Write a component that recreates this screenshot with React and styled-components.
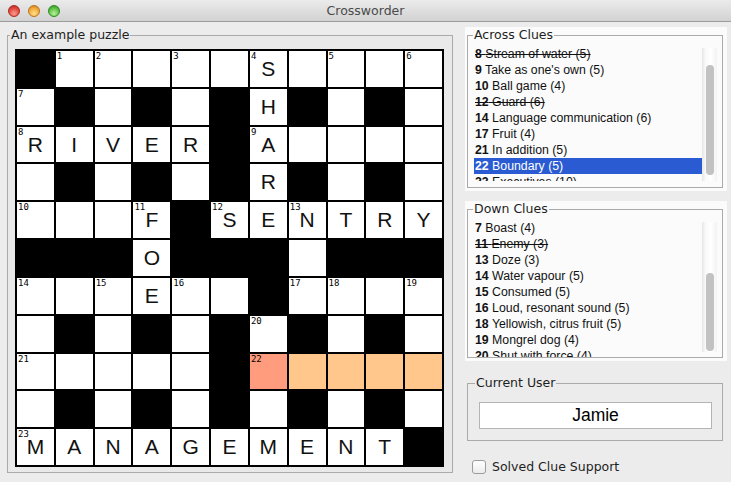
import React from 'react'
import styled, { createGlobalStyle } from 'styled-components'

const GlobalStyle = createGlobalStyle`
  html, body { margin: 0; padding: 0; background: #ececec; }
  * { box-sizing: border-box; }
`

const uiFont = `"DejaVu Sans", "Liberation Sans", sans-serif`
const listFont = `"Liberation Sans", Arial, sans-serif`

const Window = styled.div`
  width: 731px;
  height: 482px;
  background: #ececec;
  display: flex;
  flex-direction: column;
  overflow: hidden;
`

const TitleBar = styled.div`
  height: 22px;
  flex: none;
  display: flex;
  align-items: center;
  padding-left: 8px;
  background: linear-gradient(#ebebeb, #d2d2d2);
  border-bottom: 1px solid #9c9c9c;
`

const Lights = styled.div`
  display: flex;
  gap: 8px;
`

const lightColors = {
  red: ['#ff9a8f', '#e0463d', '#a92a22'],
  yellow: ['#ffe08a', '#f2a83a', '#b9741c'],
  green: ['#b7f09a', '#5cbf43', '#2f8a23'],
}

const Light = styled.span`
  width: 12px;
  height: 12px;
  border-radius: 50%;
  border: 1px solid ${p => lightColors[p.$c][2]};
  background: radial-gradient(circle at 50% 75%, ${p => lightColors[p.$c][0]} 0%, ${p => lightColors[p.$c][1]} 60%, ${p => lightColors[p.$c][2]} 100%);
`

const Title = styled.div`
  flex: 1;
  text-align: center;
  margin-left: -60px;
  font: 12.5px ${uiFont};
  color: #4a4a4a;
`

const Main = styled.div`
  flex: 1;
  display: flex;
  padding: 5px 0 0 7px;
  gap: 12px;
`

const Box = styled.fieldset`
  margin: 0;
  border: 1px solid #aaaaaa;
  padding: ${p => p.$pad};
  min-width: 0;
`

const Legend = styled.legend`
  font: 12.5px ${uiFont};
  line-height: 16px;
  color: #1e1e1e;
  padding: 0 1px;
  margin-left: ${p => p.$ml || 0}px;
`

const PuzzleBox = styled(Box)`
  width: 446px;
  height: 446px;
  background: #e9e9e9;
`

const Grid = styled.div`
  width: 429px;
  height: 418px;
  background: #000;
  padding: 2px;
  display: grid;
  grid-template-columns: repeat(11, 1fr);
  grid-template-rows: repeat(11, 1fr);
  gap: 2px;
`

const cellBg = {
  block: '#000',
  open: '#fff',
  start: '#ff9c7e',
  word: '#ffc78c',
}

const Cell = styled.div`
  position: relative;
  background: ${p => cellBg[p.$kind]};
  display: flex;
  align-items: center;
  justify-content: center;
  font: 21px ${listFont};
  color: #111;
`

const Num = styled.span`
  position: absolute;
  top: 1px;
  left: 1px;
  font: 9px "DejaVu Sans Mono", monospace;
  line-height: 9px;
  color: #000;
`

const Side = styled.div`
  width: 262px;
  display: flex;
  flex-direction: column;
`

const ListCard = styled.div`
  background: #fbfbfb;
  height: ${p => p.$h}px;
  margin-bottom: ${p => p.$mb || 0}px;
  padding: 0 4px 3px 2px;
`

const ClueBox = styled(Box)`
  height: 100%;
  display: flex;
`

const ListRow = styled.div`
  display: flex;
  align-items: flex-start;
  width: 100%;
  height: ${p => p.$h}px;
`

const List = styled.div`
  width: 228px;
  height: 100%;
  overflow: hidden;
  font: 12.3px ${listFont};
  color: #111;
`

const Clue = styled.div`
  height: 16px;
  line-height: 16px;
  padding-left: 1px;
  white-space: nowrap;
  background: ${p => (p.$selected ? '#2a5bd3' : 'transparent')};
  color: ${p => (p.$selected ? '#fff' : '#111')};
  text-decoration: ${p => (p.$solved ? 'line-through' : 'none')};
  b { font-weight: bold; }
`

const Track = styled.div`
  width: 15px;
  height: ${p => p.$h}px;
  margin-top: 2px;
  background: linear-gradient(to right, #e6e6e6, #fafafa 25%, #fff 60%, #f2f2f2);
  display: flex;
  justify-content: center;
`

const Thumb = styled.div`
  width: 8px;
  border-radius: 4px;
  background: #c2c2c2;
`

const UserBox = styled(Box)`
  margin: 14px 4px 0 2px;
`

const UserField = styled.div`
  height: 27px;
  background: #fff;
  border: 1px solid #b4b4b4;
  display: flex;
  align-items: center;
  justify-content: center;
  font: 17.5px ${listFont};
  color: #000;
`

const CheckRow = styled.label`
  display: flex;
  align-items: center;
  margin-top: 18px;
  padding-left: 7px;
  font: 12.5px ${uiFont};
  color: #1e1e1e;
`

const CheckBox = styled.span`
  width: 14px;
  height: 14px;
  border: 1px solid #9c9c9c;
  border-radius: 3px;
  background: linear-gradient(#ffffff, #ececec);
  margin-right: 6px;
`

const rows = [
  '#.....S....',
  '.#.#.#H#.#.',
  'RIVER#A....',
  '.#.#.#R#.#.',
  '...F#SENTRY',
  '###O###.###',
  '...E..#....',
  '.#.#.#.#.#.',
  '.....#.....',
  '.#.#.#.#.#.',
  'MANAGEMENT#',
]

const numbers = {
  '0,1': 1, '0,2': 2, '0,4': 3, '0,6': 4, '0,8': 5, '0,10': 6,
  '1,0': 7, '2,0': 8, '2,6': 9, '4,0': 10, '4,3': 11, '4,5': 12, '4,7': 13,
  '6,0': 14, '6,2': 15, '6,4': 16, '6,7': 17, '6,8': 18, '6,10': 19,
  '7,6': 20, '8,0': 21, '8,6': 22, '10,0': 23,
}

// the selected clue: 22 across
function kindOf(r, c, ch) {
  if (ch === '#') return 'block'
  if (r === 8 && c === 6) return 'start'
  if (r === 8 && c > 6) return 'word'
  return 'open'
}

const across = [
  { n: 8, t: 'Stream of water (5)', solved: true },
  { n: 9, t: "Take as one's own (5)" },
  { n: 10, t: 'Ball game (4)' },
  { n: 12, t: 'Guard (6)', solved: true },
  { n: 14, t: 'Language communication (6)' },
  { n: 17, t: 'Fruit (4)' },
  { n: 21, t: 'In addition (5)' },
  { n: 22, t: 'Boundary (5)', selected: true },
  { n: 23, t: 'Executives (10)' },
]

const down = [
  { n: 7, t: 'Boast (4)' },
  { n: 11, t: 'Enemy (3)', solved: true },
  { n: 13, t: 'Doze (3)' },
  { n: 14, t: 'Water vapour (5)' },
  { n: 15, t: 'Consumed (5)' },
  { n: 16, t: 'Loud, resonant sound (5)' },
  { n: 18, t: 'Yellowish, citrus fruit (5)' },
  { n: 19, t: 'Mongrel dog (4)' },
  { n: 20, t: 'Shut with force (4)' },
]

function ClueList({ title, clues, cardHeight, pad, listHeight, trackHeight, thumbTop, thumbHeight, mb }) {
  return (
    <ListCard $h={cardHeight} $mb={mb}>
      <ClueBox $pad={pad}>
        <Legend $ml={-1}>{title}</Legend>
        <ListRow $h={listHeight}>
          <List>
            {clues.map(c => (
              <Clue key={c.n} $selected={c.selected} $solved={c.solved}>
                <b>{c.n}</b> {c.t}
              </Clue>
            ))}
          </List>
          <Track $h={trackHeight}>
            <Thumb style={{ marginTop: thumbTop, height: thumbHeight }} />
          </Track>
        </ListRow>
      </ClueBox>
    </ListCard>
  )
}

export default function App() {
  return (
    <>
      <GlobalStyle />
      <Window>
        <TitleBar>
          <Lights>
            <Light $c="red" />
            <Light $c="yellow" />
            <Light $c="green" />
          </Lights>
          <Title>Crossworder</Title>
        </TitleBar>

        <Main>
          <PuzzleBox $pad="6px 7px 5px 7px">
            <Legend $ml={-5}>An example puzzle</Legend>
            <Grid>
              {rows.map((row, r) =>
                row.split('').map((ch, c) => (
                  <Cell key={r + '-' + c} $kind={kindOf(r, c, ch)}>
                    {numbers[r + ',' + c] && <Num>{numbers[r + ',' + c]}</Num>}
                    {ch !== '#' && ch !== '.' ? ch : null}
                  </Cell>
                ))
              )}
            </Grid>
          </PuzzleBox>

          <Side>
            <ClueList title="Across Clues" clues={across} cardHeight={164} pad="3px 5px 5px 6px"
              listHeight={135} trackHeight={133} thumbTop={17} thumbHeight={110} mb={10} />
            <ClueList title="Down Clues" clues={down} cardHeight={160} pad="3px 5px 0 6px"
              listHeight={137} trackHeight={130} thumbTop={51} thumbHeight={78} />

            <UserBox $pad="11px 10px 11px 11px">
              <Legend $ml={-4}>Current User</Legend>
              <UserField>Jamie</UserField>
            </UserBox>

            <CheckRow>
              <CheckBox />
              Solved Clue Support
            </CheckRow>
          </Side>
        </Main>
      </Window>
    </>
  )
}
